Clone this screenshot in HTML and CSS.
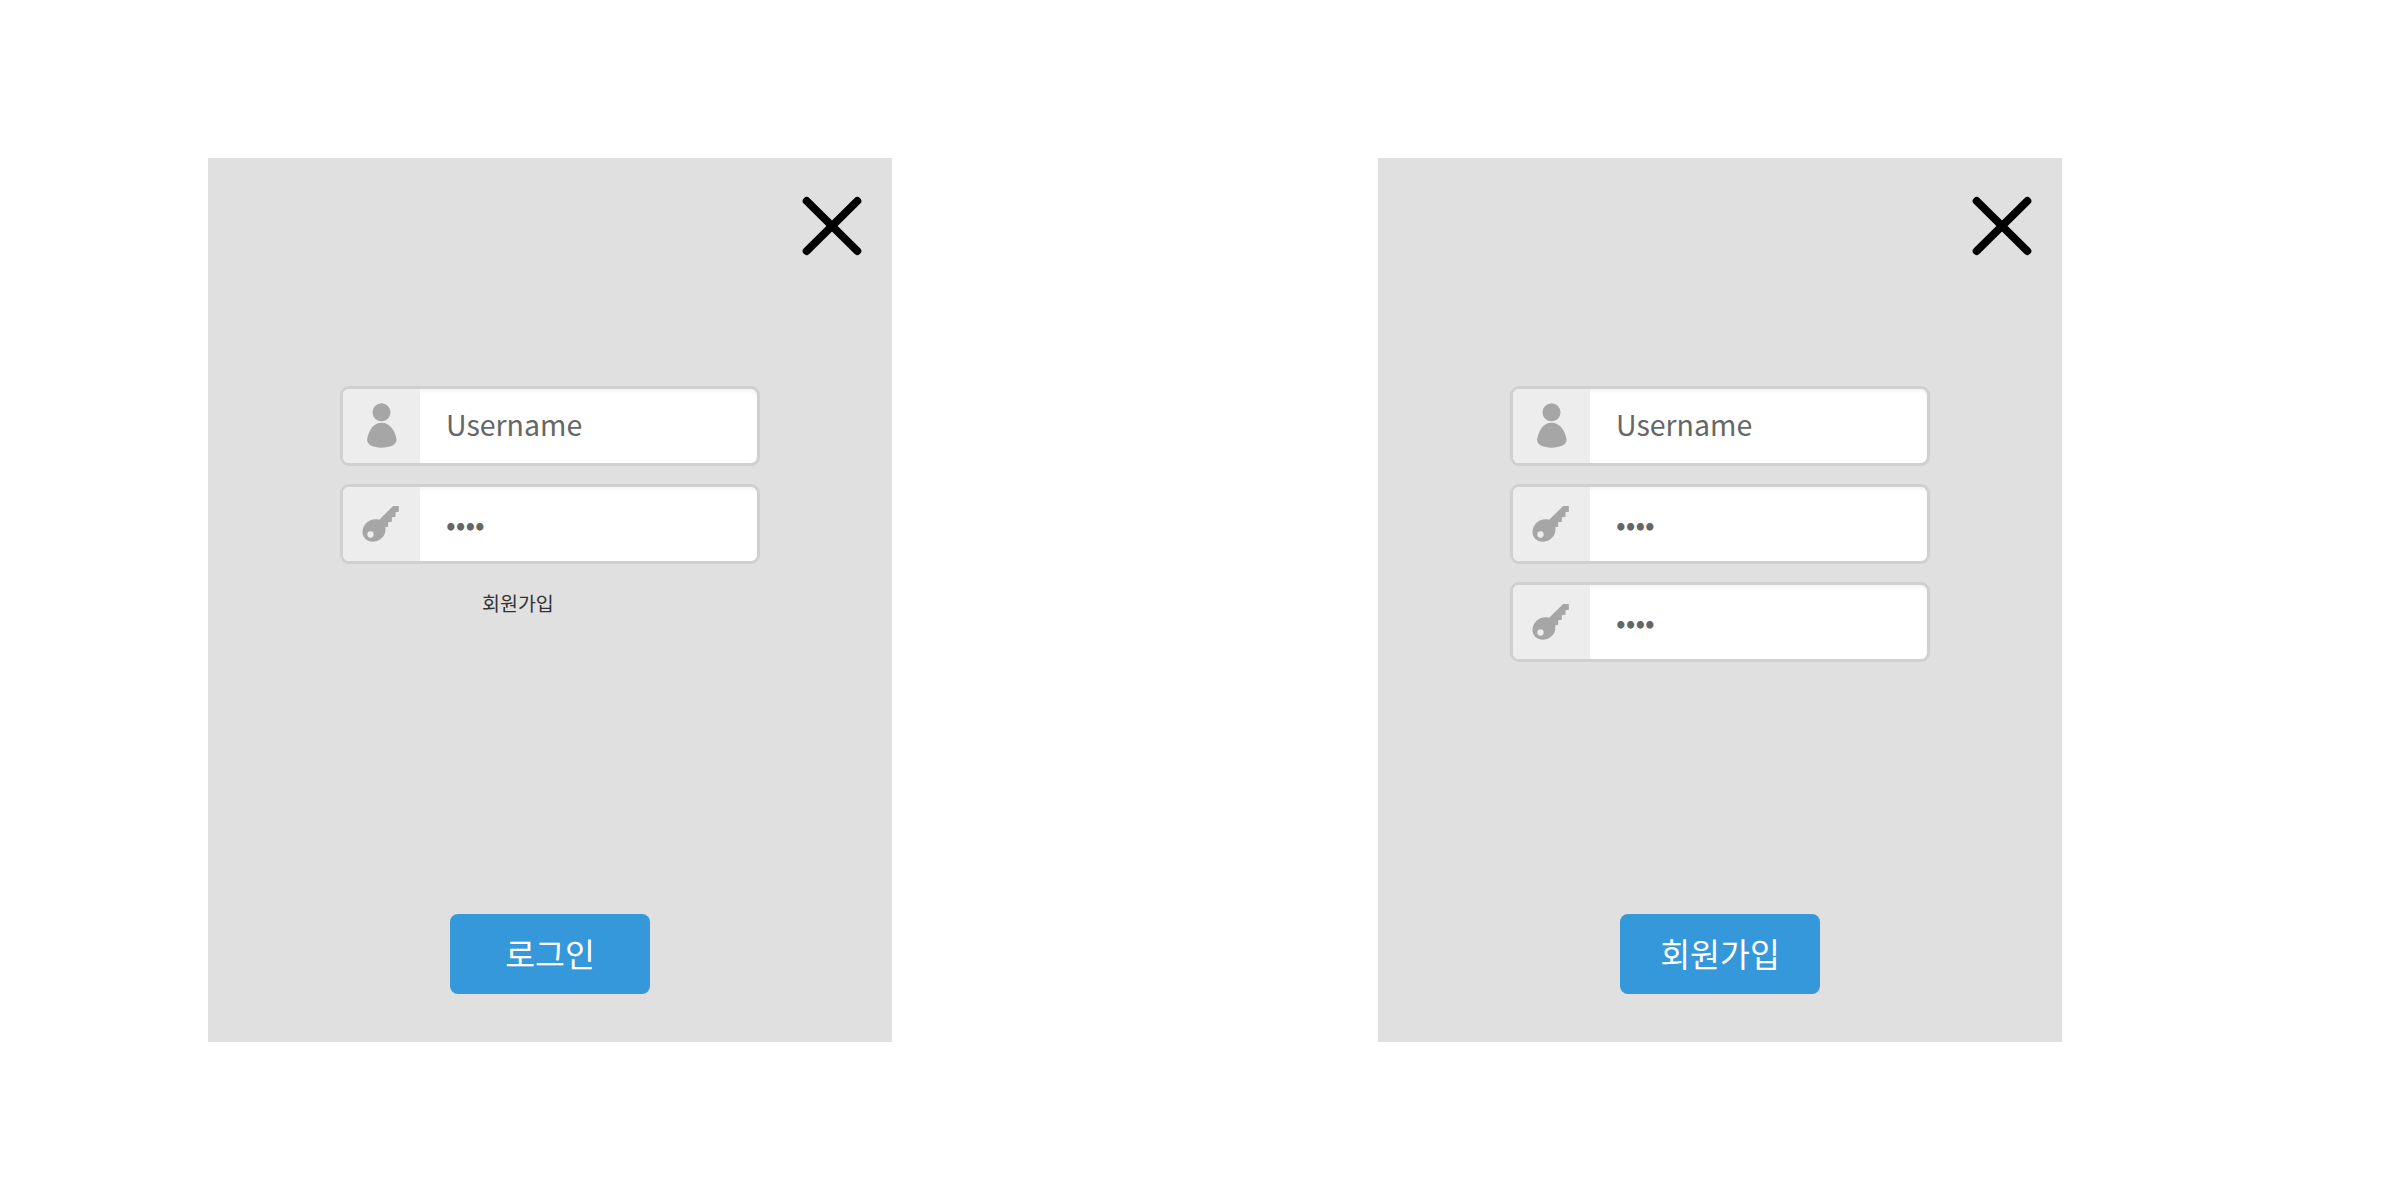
FILE: index.html
```html
<!DOCTYPE html>
<html lang="ko">

<head>
    <meta charset="UTF-8">
    <title>로그인 / 회원가입</title>
    <link rel="stylesheet" href="styles.css">
</head>

<body>
    <!-- 로그인 -->
    <div class="panel">
        <svg class="close-icon" viewBox="0 0 64 64">
            <path d="M6.7 7 L57.3 57 M57.3 7 L6.7 57" />
        </svg>
        <div class="form">
            <div class="field">
                <div class="field-icon">
                    <svg viewBox="52.5 66 144 144">
                        <circle cx="123" cy="97" r="27" />
                        <path d="M123 128 C100 128 84 150 80 178 C78 196 100 203 123 203 C146 203 170 196 168 178 C164 150 146 128 123 128 Z" />
                    </svg>
                </div>
                <div class="field-text">Username</div>
            </div>
            <div class="field">
                <div class="field-icon">
                    <svg viewBox="52.5 60 144 144">
                        <path fill-rule="evenodd" d="M158 78 H175 V95 L165 97 V110 L154 112 V125 L143 127 V140 L134 142 C135 147 135 151 134 156 C131 174 112 186 94 185 C78 184 66 172 66 156 C66 136 84 118 104 118 C108 118 112 118 116 119 Z M90 154 A9.500 9.500 0 1 0 90 173 A9.500 9.500 0 1 0 90 154 Z" />
                    </svg>
                </div>
                <div class="field-text dots">••••</div>
            </div>
            <a class="signup-link" href="#">회원가입</a>
        </div>
        <button class="submit-btn" type="button">로그인</button>
    </div>

    <!-- 회원가입 -->
    <div class="panel">
        <svg class="close-icon" viewBox="0 0 64 64">
            <path d="M6.7 7 L57.3 57 M57.3 7 L6.7 57" />
        </svg>
        <div class="form">
            <div class="field">
                <div class="field-icon">
                    <svg viewBox="52.5 66 144 144">
                        <circle cx="123" cy="97" r="27" />
                        <path d="M123 128 C100 128 84 150 80 178 C78 196 100 203 123 203 C146 203 170 196 168 178 C164 150 146 128 123 128 Z" />
                    </svg>
                </div>
                <div class="field-text">Username</div>
            </div>
            <div class="field">
                <div class="field-icon">
                    <svg viewBox="52.5 60 144 144">
                        <path fill-rule="evenodd" d="M158 78 H175 V95 L165 97 V110 L154 112 V125 L143 127 V140 L134 142 C135 147 135 151 134 156 C131 174 112 186 94 185 C78 184 66 172 66 156 C66 136 84 118 104 118 C108 118 112 118 116 119 Z M90 154 A9.500 9.500 0 1 0 90 173 A9.500 9.500 0 1 0 90 154 Z" />
                    </svg>
                </div>
                <div class="field-text dots">••••</div>
            </div>
            <div class="field">
                <div class="field-icon">
                    <svg viewBox="52.5 60 144 144">
                        <path fill-rule="evenodd" d="M158 78 H175 V95 L165 97 V110 L154 112 V125 L143 127 V140 L134 142 C135 147 135 151 134 156 C131 174 112 186 94 185 C78 184 66 172 66 156 C66 136 84 118 104 118 C108 118 112 118 116 119 Z M90 154 A9.500 9.500 0 1 0 90 173 A9.500 9.500 0 1 0 90 154 Z" />
                    </svg>
                </div>
                <div class="field-text dots">••••</div>
            </div>
        </div>
        <button class="submit-btn" type="button">회원가입</button>
    </div>
</body>

</html>
```

FILE: styles.css
```css
body {
    font-family: "Noto Sans CJK KR", "Noto Sans", sans-serif;
    display: flex;
    gap: 486px;
    margin: 0;
    padding: 158px 0 0 208px;
    background-color: white;
}

.panel {
    display: flex;
    flex-direction: column;
    align-items: center;
    box-sizing: border-box;
    width: 684px;
    height: 884px;
    padding: 36px 0 48px;
    background-color: #e0e0e0;
}

.close-icon {
    align-self: flex-end;
    width: 64px;
    height: 64px;
    margin-right: 28px;
    fill: none;
    stroke: black;
    stroke-width: 8;
    stroke-linecap: round;
}

.form {
    display: flex;
    flex-direction: column;
    gap: 18px;
    width: 420px;
    margin-top: 128px;
}

.field {
    display: flex;
    box-sizing: border-box;
    height: 80px;
    background-color: white;
    border: 3px solid #d0d0d0;
    border-radius: 9px;
    box-shadow: inset 0 3px 3px rgba(0, 0, 0, 0.04);
    overflow: hidden;
}

.field-icon {
    display: flex;
    justify-content: center;
    align-items: center;
    width: 77px;
    background-color: #ededed;
}

.field-icon svg {
    width: 48px;
    height: 48px;
    fill: #a6a6a6;
}

.field-text {
    padding-left: 26px;
    line-height: 70px;
    font-size: 28.5px;
    color: #666;
}

.dots {
    line-height: 72px;
}

.signup-link {
    margin: 7px 0 0 142px;
    font-size: 19.5px;
    line-height: 28px;
    color: #333;
    text-decoration: none;
}

.submit-btn {
    width: 200px;
    height: 80px;
    margin-top: auto;
    padding: 0 0 4px;
    font-family: inherit;
    font-size: 32.5px;
    color: white;
    background-color: #3498db;
    border: none;
    border-radius: 8px;
    cursor: pointer;
}
```
